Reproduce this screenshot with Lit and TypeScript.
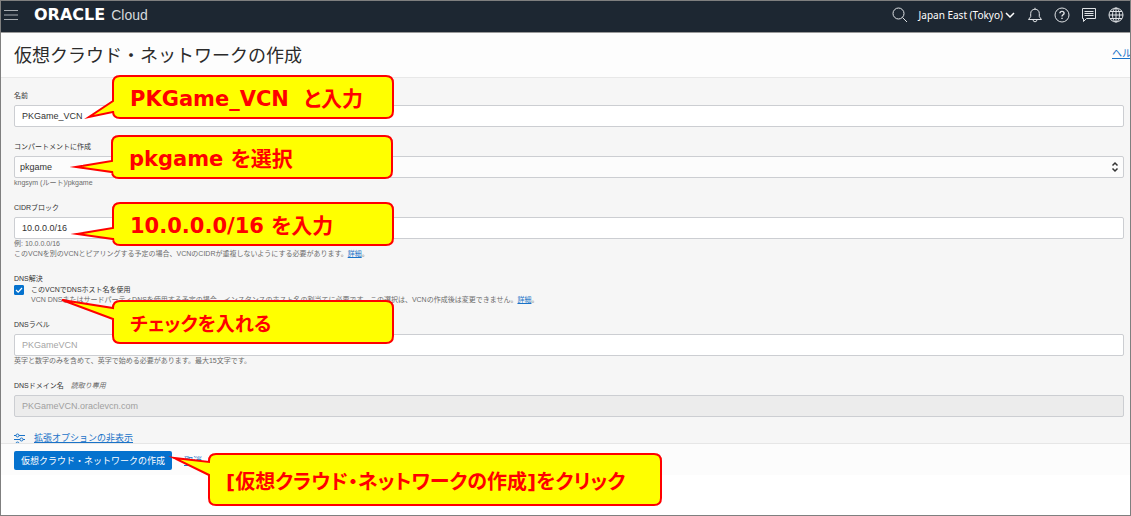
import { LitElement, html, css, svg } from "lit";
import { customElement, property } from "lit/decorators.js";

const sans = css`"Liberation Sans", "Noto Sans CJK JP", sans-serif`;

/** Speech bubble that floats over the form and points at a control. */
@customElement("call-out")
class CallOut extends LitElement {
  @property() path = "";

  static styles = css`
    :host {
      display: block;
      position: absolute;
      pointer-events: none;
      font: bold 21px/28px "DejaVu Sans", "Noto Sans CJK JP", sans-serif;
    }
    .shape {
      position: absolute;
      left: 0;
      top: 0;
      width: 1px;
      height: 1px;
      overflow: visible;
    }
    .text {
      position: relative;
      display: flex;
      align-items: center;
      box-sizing: border-box;
      height: 100%;
      padding: 4px 0 0 17px;
      color: #f00;
      font-feature-settings: "palt";
      white-space: pre;
    }
  `;

  render() {
    return html`
      <svg class="shape" aria-hidden="true">
        <path d=${this.path} fill="#ff0" stroke="#f00" stroke-width="2" stroke-linejoin="miter" stroke-miterlimit="8" />
      </svg>
      <div class="text"><slot></slot></div>
    `;
  }
}

/** Outline of a rounded bubble with a tail leaving its left edge. */
function bubble(w: number, h: number, tipX: number, tipY: number, from: number, to: number): string {
  const r = 7;
  return `M${r} 0H${w - r}Q${w} 0 ${w} ${r}V${h - r}Q${w} ${h} ${w - r} ${h}H${r}Q0 ${h} 0 ${h - r}V${to}L${tipX} ${tipY}L0 ${from}V${r}Q0 0 ${r} 0Z`;
}

const searchIcon = svg`<circle cx="6.5" cy="6.5" r="5.5"/><path d="M10.5 10.5L15 15"/>`;
const bellIcon = svg`<path d="M1.5 12.5H14.5L12.3 9.6V6.6Q12.3 2.6 8 2.2Q3.7 2.6 3.7 6.6V9.6ZM8 2.2V.8M6 12.8Q6.2 14.8 8 14.8Q9.8 14.8 10 12.8"/>`;
const helpIcon = svg`<circle cx="8" cy="8" r="7"/><path d="M5.9 6.3Q6 4.4 8 4.4Q10.1 4.4 10.1 6.2Q10.1 7.3 8.9 7.9Q8 8.4 8 9.5M8 10.7V12" stroke-width="1.4"/>`;
const chatIcon = svg`<path d="M1.5 1.5H14.5V11.5H5.5L2.5 14.5V11.5H1.5ZM3.5 4.5H12.5M3.5 6.5H12.5M3.5 8.5H12.5"/>`;
const globeIcon = svg`<circle cx="8" cy="8" r="7"/><ellipse cx="8" cy="8" rx="3.5" ry="7"/><path d="M8 1V15M1 8H15M2 4.5H14M2 11.5H14"/>`;

@customElement("app-root")
class AppRoot extends LitElement {
  static styles = css`
    :host {
      display: block;
      font: 9px/12px ${sans};
      color: #333;
    }
    .shell {
      position: relative;
      box-sizing: border-box;
      min-height: 100vh;
      border: 1px solid #7f7f7f;
      background: #fff;
      overflow: hidden;
    }
    button,
    input,
    select {
      font: inherit;
      color: inherit;
      margin: 0;
    }
    a {
      color: #1a73c8;
    }
    .top {
      display: flex;
      align-items: center;
      height: 28px;
      padding: 0 6px 3px 3px;
      background: #1d2732;
      border-bottom: 1px solid #9a9a9a;
      color: #fff;
    }
    .icon-button {
      display: block;
      padding: 0;
      border: 0;
      background: none;
    }
    .icon {
      display: block;
      width: 16px;
      height: 16px;
      fill: none;
      stroke: #dfe2e5;
      stroke-width: 1;
    }
    .menu {
      width: 14px;
      height: 10px;
      stroke: #a8adb2;
    }
    .brand {
      display: flex;
      align-items: baseline;
      gap: 6px;
      margin-left: 16px;
      line-height: 20px;
    }
    .word {
      font: bold 16px/20px "DejaVu Sans", sans-serif;
    }
    .cloud {
      font: 14px/20px "Liberation Sans", sans-serif;
      color: #d5d9dc;
    }
    .tools {
      display: flex;
      align-items: center;
      gap: 11px;
      margin-left: auto;
    }
    .region {
      display: flex;
      align-items: center;
      gap: 2px;
      padding: 0;
      margin-right: 1px;
      border: 0;
      background: none;
      color: #fff;
      font: 10px/16px "Noto Sans", sans-serif;
    }
    .chevron {
      width: 10px;
      height: 6px;
      fill: none;
      stroke: #fff;
      stroke-width: 1.5;
    }
    .heading {
      display: flex;
      align-items: center;
      justify-content: space-between;
      height: 42px;
      padding: 0 0 2px 13px;
      border-bottom: 1px solid #e8e8e8;
      background: #fdfdfd;
      overflow: hidden;
    }
    .title {
      margin: 0;
      font: 18px/30px "Noto Sans CJK JP", sans-serif;
      color: #2b2b2b;
    }
    .help {
      flex: none;
      margin-right: -12px;
      font-size: 10px;
    }
    .form {
      display: flex;
      flex-direction: column;
      gap: 14px;
      padding: 12px 6px 0 13px;
      background: #f6f6f6;
      overflow: hidden;
    }
    .field {
      display: flex;
      flex-direction: column;
      min-width: 0;
      margin: 0;
      padding: 0;
      border: 0;
    }
    .label {
      padding: 0;
      font-size: 7px;
      line-height: 12px;
      color: #333;
    }
    .readonly {
      margin-left: 5px;
      color: #666;
      font-style: italic;
    }
    .box {
      box-sizing: border-box;
      width: 100%;
      height: 22px;
      margin-top: 3px;
      padding: 0 7px;
      border: 1px solid #ccced2;
      border-radius: 2px;
      background: #fff;
      outline: 0;
    }
    .box::placeholder {
      color: #a5a5a5;
      opacity: 1;
    }
    .box:disabled {
      background: #ececec;
      color: #a0a0a0;
    }
    .pick {
      display: grid;
      align-items: center;
      margin-top: 3px;
    }
    .pick > * {
      grid-area: 1 / 1;
    }
    .select {
      appearance: none;
      margin: 0;
      padding: 0 5px;
      background: #fcfcfc;
    }
    .arrows {
      justify-self: end;
      width: 8px;
      height: 12px;
      margin-right: 5px;
      fill: none;
      stroke: #333;
      stroke-width: 1.5;
      pointer-events: none;
    }
    .hint {
      margin: 0;
      font-size: 7px;
      line-height: 10px;
      color: #6c6c6c;
      white-space: nowrap;
    }
    .option {
      display: grid;
      grid-template-columns: 10px 1fr;
      column-gap: 7px;
    }
    .tick {
      display: grid;
      width: 10px;
      height: 10px;
    }
    .tick > * {
      grid-area: 1 / 1;
    }
    .check {
      appearance: none;
      width: 10px;
      height: 10px;
      border: 1px solid #0572ce;
      border-radius: 1px;
      background: #fff;
    }
    .check:checked {
      background: #0572ce;
    }
    .mark {
      width: 10px;
      height: 10px;
      fill: none;
      stroke: #fff;
      stroke-width: 1.2;
      pointer-events: none;
    }
    .check:not(:checked) + .mark {
      display: none;
    }
    .option-label {
      font-size: 7px;
      line-height: 10px;
    }
    .option .hint {
      grid-column: 2;
    }
    .advanced {
      display: flex;
      gap: 9px;
      height: 12px;
      line-height: 14px;
    }
    .sliders {
      flex: none;
      width: 11px;
      height: 12px;
      margin-top: 2px;
      fill: none;
      stroke: #1a73c8;
    }
    .actions {
      display: flex;
      align-items: center;
      gap: 12px;
      padding: 7px 13px 5px;
      border-top: 1px solid #e6e6e6;
      background: #fcfcfc;
    }
    .submit {
      padding: 0 7px;
      border: 0;
      border-radius: 2px;
      background: #0572ce;
      color: #fff;
      font: 9px/19px "Noto Sans CJK JP", sans-serif;
    }
    .to-name { left: 112px; top: 75px; width: 280px; height: 42px; }
    .to-compartment { left: 111px; top: 135px; width: 280px; height: 42px; }
    .to-cidr { left: 112px; top: 202px; width: 280px; height: 42px; }
    .to-dns { left: 112px; top: 300px; width: 280px; height: 42px; font-size: 19px; }
    .to-submit { left: 208px; top: 453px; width: 452px; height: 51px; font-size: 20px; }
  `;

  private iconButton(label: string, shape: unknown) {
    return html`<button class="icon-button" aria-label=${label}>
      <svg class="icon" viewBox="0 0 16 16">${shape}</svg>
    </button>`;
  }

  render() {
    return html`
      <div class="shell">
        <header class="top">
          <button class="icon-button" aria-label="メニュー">
            <svg class="icon menu" viewBox="0 0 14 10"><path d="M0 .5H14M0 5H14M0 9.5H14" /></svg>
          </button>
          <div class="brand"><span class="word">ORACLE</span><span class="cloud">Cloud</span></div>
          <div class="tools">
            ${this.iconButton("検索", searchIcon)}
            <button class="region">
              Japan East (Tokyo)
              <svg class="chevron" viewBox="0 0 10 6"><path d="M1 1L5 5L9 1" /></svg>
            </button>
            ${this.iconButton("通知", bellIcon)} ${this.iconButton("ヘルプ", helpIcon)}
            ${this.iconButton("チャット", chatIcon)} ${this.iconButton("言語", globeIcon)}
          </div>
        </header>
        <div class="heading">
          <h1 class="title">仮想クラウド・ネットワークの作成</h1>
          <a class="help" href="#">ヘルプ</a>
        </div>
        <form class="form" id="vcn" @submit=${(e: Event) => e.preventDefault()}>
          <div class="field">
            <label class="label" for="name">名前</label>
            <input class="box" id="name" value="PKGame_VCN" />
          </div>
          <div class="field">
            <label class="label" for="compartment">コンパートメントに作成</label>
            <div class="pick">
              <select class="box select" id="compartment">
                <option>pkgame</option>
              </select>
              <svg class="arrows" viewBox="0 0 8 12"><path d="M1.5 4.5L4 2L6.5 4.5M1.5 7.5L4 10L6.5 7.5" /></svg>
            </div>
            <p class="hint">kngsym (ルート)/pkgame</p>
          </div>
          <div class="field">
            <label class="label" for="cidr">CIDRブロック</label>
            <input class="box" id="cidr" value="10.0.0.0/16" />
            <p class="hint">例: 10.0.0.0/16</p>
            <p class="hint">
              このVCNを別のVCNとピアリングする予定の場合、VCNのCIDRが重複しないようにする必要があります。<a href="#">詳細</a>。
            </p>
          </div>
          <fieldset class="field">
            <legend class="label">DNS解決</legend>
            <div class="option">
              <span class="tick">
                <input class="check" id="dns" type="checkbox" checked />
                <svg class="mark" viewBox="0 0 10 10"><path d="M2 5L4.2 7.2L8 3" /></svg>
              </span>
              <label class="option-label" for="dns">このVCNでDNSホスト名を使用</label>
              <p class="hint">
                VCN DNSまたはサードパーティDNSを使用する予定の場合、インスタンスのホスト名の割当てに必要です。この選択は、VCNの作成後は変更できません。<a href="#">詳細</a>。
              </p>
            </div>
          </fieldset>
          <div class="field">
            <label class="label" for="dns-label">DNSラベル</label>
            <input class="box" id="dns-label" placeholder="PKGameVCN" />
            <p class="hint">英字と数字のみを含めて、英字で始める必要があります。最大15文字です。</p>
          </div>
          <div class="field">
            <label class="label" for="domain">DNSドメイン名 <span class="readonly">読取り専用</span></label>
            <input class="box" id="domain" value="PKGameVCN.oraclevcn.com" disabled />
          </div>
          <div class="advanced">
            <svg class="sliders" viewBox="0 0 11 12">
              <path d="M0 2.5H2M5 2.5H11M0 6.5H6M9 6.5H11M0 10.5H2M5 10.5H11" />
              <circle cx="3.5" cy="2.5" r="1.5" />
              <circle cx="7.5" cy="6.5" r="1.5" />
              <circle cx="3.5" cy="10.5" r="1.5" />
            </svg>
            <a href="#">拡張オプションの非表示</a>
          </div>
        </form>
        <footer class="actions">
          <button class="submit" type="submit" form="vcn">仮想クラウド・ネットワークの作成</button>
          <a href="#">取消</a>
        </footer>

        <call-out class="to-name" path=${bubble(280, 42, -24, 41, 25, 36)}>PKGame_VCN  と入力</call-out>
        <call-out class="to-compartment" path=${bubble(280, 42, -36, 31, 25, 36)}>pkgame を選択</call-out>
        <call-out class="to-cidr" path=${bubble(280, 42, -36, 31, 25, 36)}>10.0.0.0/16 を入力</call-out>
        <call-out class="to-dns" path=${bubble(280, 42, -51, -1, 7, 18)}>チェックを入れる</call-out>
        <call-out class="to-submit" path=${bubble(452, 51, -35, 4, 8, 21)}>[仮想クラウド・ネットワークの作成]をクリック</call-out>
      </div>
    `;
  }
}
